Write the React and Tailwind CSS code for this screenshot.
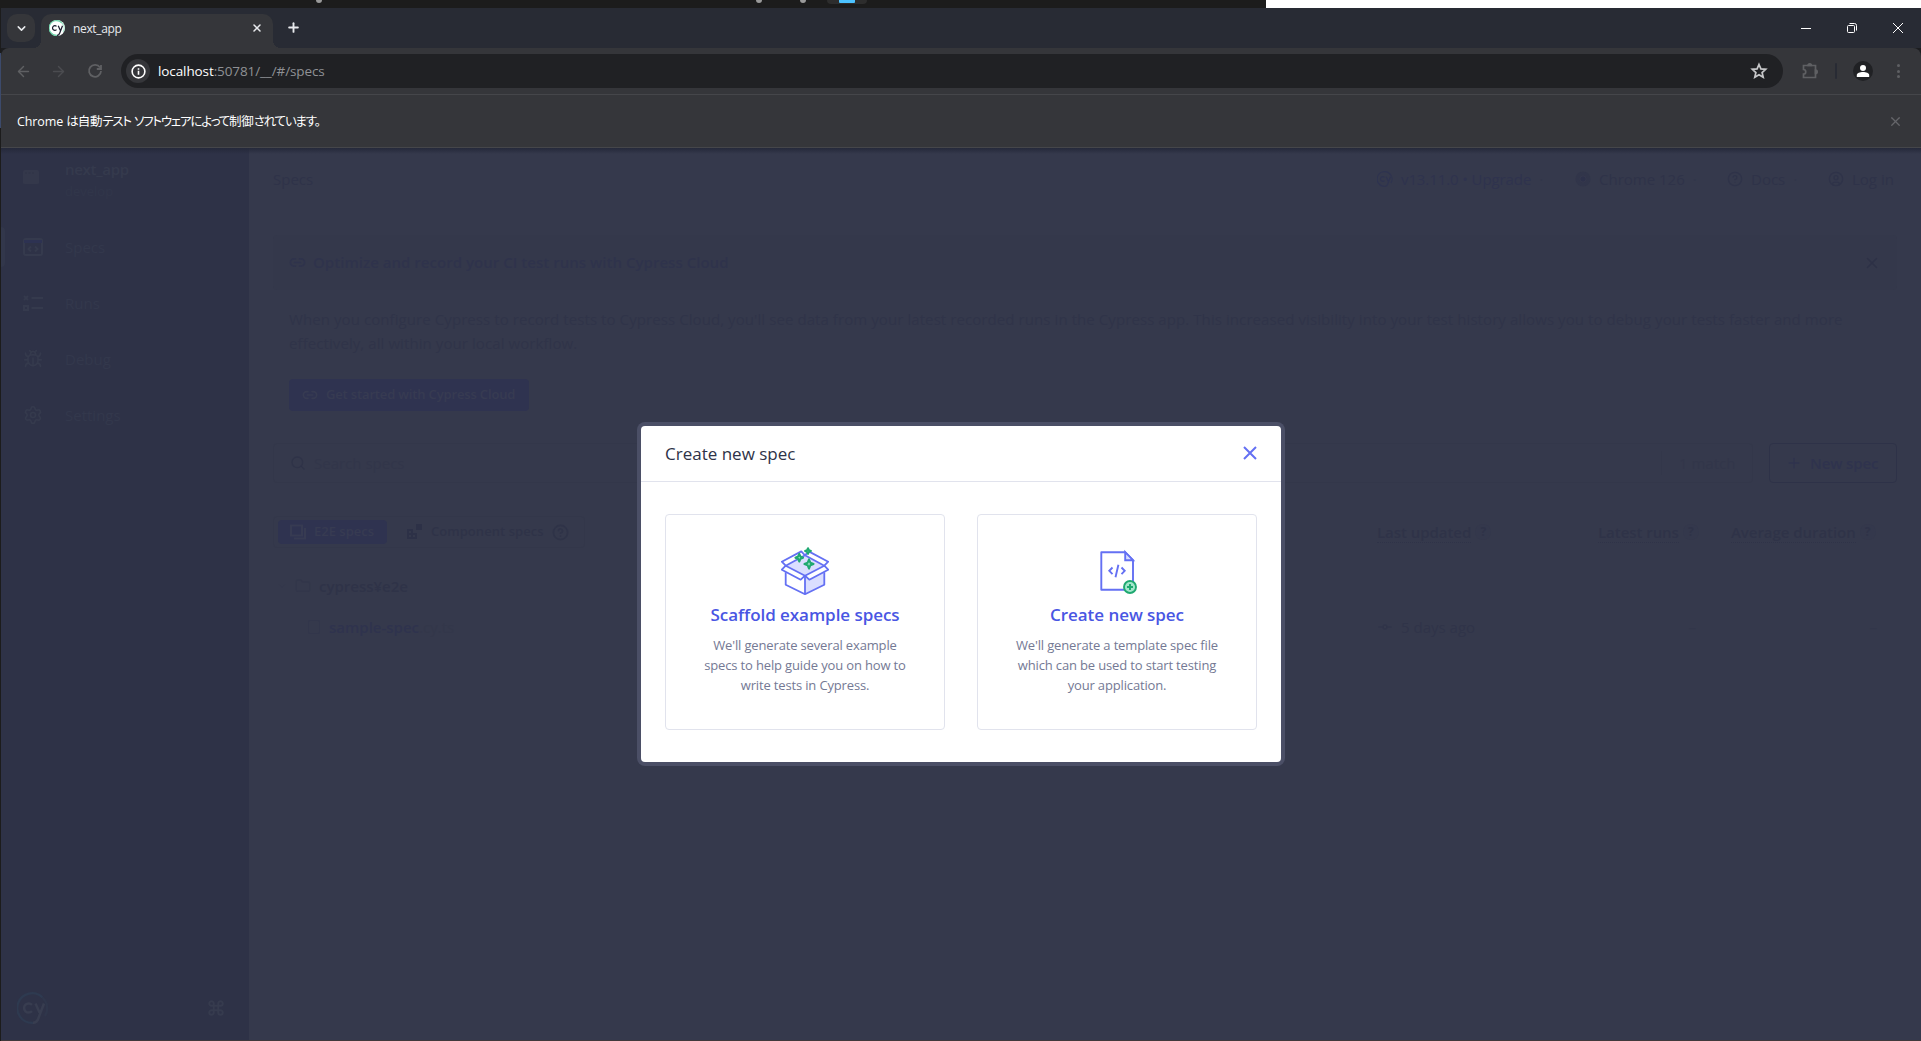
import React from 'react';
import { ArrowLeft, ArrowRight, Command, Link2, Plus, Search, Settings, Bug, X, ChevronDown, Folder, GitCommitHorizontal, CircleHelp, CircleUser } from 'lucide-react';

const navItems = [
  { label: 'Specs', icon: SpecsIcon, active: true },
  { label: 'Runs', icon: RunsIcon },
  { label: 'Debug', icon: Bug },
  { label: 'Settings', icon: Settings },
];

function SpecsIcon({ className }) {
  return (
    <svg viewBox="0 0 20 20" fill="none" stroke="currentColor" strokeWidth="2" className={className}>
      <rect x="1" y="2" width="18" height="16" rx="1.500" />
      <path d="M1 4.500h18" stroke="#2d3252" strokeWidth="3" />
      <path d="M8 9.500L5.500 12 8 14.500M12 9.500l2.500 2.500-2.500 2.500" />
    </svg>
  );
}

function RunsIcon({ className }) {
  return (
    <svg viewBox="0 0 20 20" fill="none" stroke="currentColor" strokeWidth="2" className={className}>
      <path d="M1 3l4 4M5 3L1 7M8.500 5H20M8.500 15H20" />
      <rect x="1" y="13" width="4" height="4" />
    </svg>
  );
}

function CypressMark({ className, ring, tail, letters }) {
  return (
    <svg viewBox="0 0 32 32" fill="none" className={className}>
      <path d="M25.500 5.500A14.800 14.800 0 1 0 16 30.800" stroke={ring} strokeWidth="2.200" />
      <path d="M25.500 5.500A14.800 14.800 0 0 1 28 24" stroke={tail} strokeWidth="2.200" />
      <path d="M15 12.800a4.600 4.600 0 1 0 0 6.400M18.500 11.500l4 9M27 11.500l-5.500 14.500c-1 3-2.500 4.800-5.500 4.800" stroke={letters} strokeWidth="2.500" />
    </svg>
  );
}

function ChromeIcon() {
  return (
    <svg viewBox="0 0 16 16" className="h-4 w-4">
      <circle cx="8" cy="8" r="7.500" fill="#31354a" />
      <circle cx="8" cy="8" r="3.200" fill="#2d314a" stroke="#36394d" />
    </svg>
  );
}

function BoxIcon() {
  return (
    <svg viewBox="0 0 48 48" fill="none" strokeWidth="1.800" strokeLinejoin="round" className="h-12 w-12">
      <path d="M4.700 18.700L24 8.300l19.300 10.400L24 28.700z" fill="#dadeff" />
      <path d="M24 28.700L43.300 22v15.700L24 47.200z" fill="#dadeff" />
      <g stroke="#6470f3">
        <path d="M4.700 25.300v12.400L24 47.200l19.300-9.500V25.300M24 28.700v18.500" />
        <path d="M4.700 18.700L.8 14.700 20.300 4.400 24 8.300z" fill="#fff" />
        <path d="M43.300 18.700l3.900-4L27.700 4.400 24 8.300z" fill="#fff" />
        <path d="M4.700 18.700L.8 22.700l18.900 10 4.300-4z" fill="#fff" />
        <path d="M43.300 18.700l3.900 4-18.900 10-4.300-4z" fill="#fff" />
      </g>
      <g fill="#a3e7cb" stroke="#1fa971" strokeWidth="2">
        <path d="M27 1.200l.9 2 2 .8-2 .9-.9 2-.9-2-2-.9 2-.8z" />
        <path d="M18.300 6.800l1.100 2.700 2.700 1.200-2.700 1.100-1.100 2.700-1.200-2.700-2.700-1.100 2.700-1.200z" />
        <path d="M28 12.400l1.300 3.300 3.300 1.300-3.300 1.300L28 21.600l-1.300-3.300-3.300-1.300 3.300-1.300z" />
      </g>
    </svg>
  );
}

function NewFileIcon() {
  return (
    <svg viewBox="0 0 48 48" fill="none" stroke="#6470f3" strokeWidth="1.900" className="h-12 w-12">
      <path d="M8.300 5.200H32l8 8v29.500H8.300z" strokeLinejoin="round" />
      <path d="M32.200 5.200v8H40z" fill="#dadeff" />
      <path d="M19.500 20.500l-3.200 3.300 3.200 3.300M28.500 20.500l3.200 3.300-3.200 3.300M25.400 17.700l-2.900 12.600" />
      <circle cx="37" cy="40" r="6" fill="#a3e7cb" stroke="#1fa971" />
      <path d="M37 37v6M34 40h6" stroke="#1fa971" strokeWidth="2" />
    </svg>
  );
}

function Taskbar() {
  return (
    <div className="flex h-2 bg-white">
      <div className="flex h-2 w-[1266px] bg-[#1c1c1c]">
        <div className="ml-[316px] h-[3px] w-1.5 rounded-b bg-[#9a9a9a]" />
        <div className="ml-[434px] h-[3px] w-1.5 rounded-b bg-[#9a9a9a]" />
        <div className="ml-[38px] h-[3px] w-1.5 rounded-b bg-[#9a9a9a]" />
        <div className="ml-[21px] flex h-1 w-10 justify-center rounded-b bg-[#2d2d2d]">
          <div className="h-[3px] w-4 rounded-b-[1px] bg-[#4cc2ff]" />
        </div>
      </div>
    </div>
  );
}

function TabStrip() {
  return (
    <div className="flex h-10 bg-[#282b34] pl-1.5 text-[#e8eaed]">
      <div className="mt-1.5 flex h-7 w-7 items-center justify-center rounded-[10px] bg-[#35363a]">
        <ChevronDown size={13} strokeWidth={2.8} />
      </div>
      <div className="relative mt-1.5 ml-1.5 flex h-[34px] w-[232px] items-center rounded-t-[10px] bg-[#35363a] pr-[10px] pb-[7px] pl-2">
        <div className="absolute bottom-0 -left-2 h-2 w-2 bg-[radial-gradient(circle_at_0_0,#282b34_8px,#35363a_8px)]" />
        <div className="absolute -right-2 bottom-0 h-2 w-2 bg-[radial-gradient(circle_at_100%_0,#282b34_8px,#35363a_8px)]" />
        <div className="h-4 w-4 rounded-full bg-white">
          <CypressMark className="h-4 w-4" ring="#69d3a7" tail="#a3e7cb" letters="#1b1e2e" />
        </div>
        <span className="mt-[3px] ml-2 text-xs tracking-[-0.35px]">next_app</span>
        <X size={12} strokeWidth={3} className="ml-auto" />
      </div>
      <Plus size={15} strokeWidth={3} className="mt-3 ml-[13px]" />
      <div className="mt-3 mr-[18px] ml-auto flex h-4 items-center gap-9 text-white">
        <svg viewBox="0 0 10 10" className="h-2.5 w-2.5" stroke="currentColor"><path d="M0 5.500h10" /></svg>
        <svg viewBox="0 0 10 10" className="h-2.5 w-2.5" fill="none" stroke="currentColor">
          <rect x=".5" y="2.500" width="7" height="7" rx="1" />
          <path d="M2.500 .5h5a2 2 0 0 1 2 2v5" />
        </svg>
        <svg viewBox="0 0 10 10" className="h-2.5 w-2.5" stroke="currentColor"><path d="M0 0l10 10M10 0L0 10" /></svg>
      </div>
    </div>
  );
}

function AddressBar() {
  return (
    <div className="bg-[#1c1d20]">
      <div className="flex h-[47px] items-center rounded-t-lg border-b border-[#45464a] bg-[#35363a] pl-[14px] text-[#5f6063]">
        <ArrowLeft size={17} strokeWidth={2} />
        <ArrowRight size={17} strokeWidth={2} className="ml-[18px] text-[#4b4c50]" />
        <svg viewBox="0 0 16 16" className="ml-[20px] h-4 w-4" fill="none" stroke="currentColor" strokeWidth="1.800">
          <path d="M13 4.500A6 6 0 1 0 14 8M14 2v4H9.800" />
        </svg>
        <div className="ml-[18px] flex h-[34px] w-[1662px] items-center rounded-full bg-[#202124] pl-[5px]">
          <div className="flex h-6 w-6 items-center justify-center rounded-full bg-[#35363a]">
            <svg viewBox="0 0 16 16" className="h-[15px] w-[15px]" fill="none" stroke="#fff" strokeWidth="1.700">
              <circle cx="8" cy="8" r="6.800" />
              <path d="M8 7.200v4.200M8 4.400v1.700" />
            </svg>
          </div>
          <span className="mt-px ml-2 text-[13.5px] tracking-[-0.1px] text-[#8f9195]">
            <span className="text-white">localhost</span>:50781/__/#/specs
          </span>
          <svg viewBox="0 0 18 18" className="mr-[15px] ml-auto h-[18px] w-[18px]" fill="none" stroke="#c7c8ca" strokeWidth="1.700">
            <path d="M9 2.500l1.900 4.400 4.800.4-3.600 3.200 1.100 4.700L9 12.700l-4.200 2.500 1.100-4.700-3.600-3.200 4.800-.4z" />
          </svg>
        </div>
        <svg viewBox="0 0 18 18" className="ml-[18px] h-[18px] w-[18px]" fill="none" stroke="currentColor" strokeWidth="1.700">
          <path d="M2.500 3.500h12v12h-12v-3.300c3 0 3-4.700 0-4.700z" />
          <path d="M7 3.500a1.700 1.700 0 0 1 3.400 0zM14.500 8a1.700 1.700 0 0 1 0 3.400z" fill="currentColor" />
        </svg>
        <div className="ml-4 h-4 w-0.5 rounded bg-[#282b34]" />
        <div className="ml-4 flex h-5 w-5 items-center justify-center rounded-full bg-[#202124]">
          <svg viewBox="0 0 14 14" className="h-3.5 w-3.5" fill="#fff">
            <circle cx="7" cy="4" r="3" />
            <path d="M.8 13v-2C.8 9 4 8 7 8s6.200 1 6.200 3v2z" />
          </svg>
        </div>
        <div className="ml-6 flex w-1 flex-col gap-[2.500px]">
          <div className="h-[3px] w-[3px] rounded-full bg-[#5f6063]" />
          <div className="h-[3px] w-[3px] rounded-full bg-[#5f6063]" />
          <div className="h-[3px] w-[3px] rounded-full bg-[#5f6063]" />
        </div>
      </div>
      <div className="flex h-[53px] items-center border-b border-[#45464a] bg-[#35363a] pr-5 pl-4">
        <span className="mt-[3px] text-[12.5px] tracking-[-1.2px] text-white [font-feature-settings:'palt']">
          <span className="tracking-[-0.1px]">Chrome </span>
          は<span className="tracking-[-0.2px]">自動</span>テスト<span className="tracking-normal"> </span>ソフトウェアによって<span className="tracking-[-0.2px]">制御</span>されています。
        </span>
        <X size={15} strokeWidth={2} className="ml-auto -mr-0.5 text-[#65666a]" />
      </div>
    </div>
  );
}

function Sidebar() {
  return (
    <aside className="flex w-[248px] flex-col bg-[#2e3247] pt-4 text-[#353a4d]">
      <div className="flex h-[43px] pl-[22px]">
        <svg viewBox="0 0 16 14" className="mt-1.5 h-3.5 w-4">
          <rect width="16" height="14" rx="1.500" fill="#34384b" />
          <path d="M2 3h2M5.500 3h2M9 3h2" stroke="#2e3247" />
        </svg>
        <div className="ml-[26px] -mt-4 pt-[9px]">
          <p className="text-[15px] leading-6 font-semibold tracking-[-0.3px]">next_app</p>
          <p className="text-[13px] leading-5 text-[#31364a]">develop</p>
        </div>
      </div>
      <nav className="mt-3 flex flex-col">
        {navItems.map(({ label, icon: Icon, active }) => (
          <div key={label} className="flex h-14 items-center">
            <div className={active ? 'h-10 w-1 rounded-r bg-[#32374b]' : 'h-10 w-1'} />
            <Icon className="ml-[18px] h-5 w-5" />
            <span className="ml-[22px] text-[15px] text-[#33384c]">{label}</span>
          </div>
        ))}
      </nav>
      <div className="mt-auto mb-4 flex items-center justify-between pr-6 pl-4">
        <CypressMark className="h-8 w-8" ring="#2e3a50" tail="#2f364b" letters="#383d50" />
        <Command size={18} strokeWidth={2.6} className="text-[#363b4e]" />
      </div>
    </aside>
  );
}

function PageHeader() {
  const dot = <span className="text-[#31364a]">·</span>;
  return (
    <header className="flex h-[62px] items-center justify-between text-[15px] text-[#2f3349]">
      <h1>Specs</h1>
      <div className="flex items-center">
        <div className="flex w-[198px] items-center gap-2 text-[#2f334e]">
          <CypressMark className="h-4 w-4" ring="#2e3350" tail="#2e3350" letters="#2e3350" />
          <span className="tracking-[-0.1px]">v13.11.0 • Upgrade</span>
          {dot}
        </div>
        <div className="flex w-[152px] items-center gap-2"><ChromeIcon /><span>Chrome 126</span>{dot}</div>
        <div className="flex w-[101px] items-center gap-2"><CircleHelp size={16} /><span>Docs</span>{dot}</div>
        <div className="flex w-[69px] items-center gap-2"><CircleUser size={16} /><span className="whitespace-nowrap">Log in</span></div>
      </div>
    </header>
  );
}

function CloudBanner() {
  return (
    <section className="mt-[25px]">
      <div className="flex h-[55px] items-center rounded bg-[#34384b] px-4 text-[#2f334c]">
        <Link2 size={17} strokeWidth={2.4} />
        <h2 className="ml-[7px] text-[15px] font-semibold tracking-[0.03px]">Optimize and record your CI test runs with Cypress Cloud</h2>
        <X size={18} className="ml-auto text-[#2d3146]" />
      </div>
      <div className="px-4 pt-[17px]">
        <p className="w-[1580px] text-[15px] leading-6 tracking-[0.08px] text-[#303449]">
          When you configure Cypress to record tests to Cypress Cloud, you'll see data from your latest recorded runs in the Cypress app. This increased visibility into your test history allows you to debug your tests faster and more<br />
          effectively, all within your local workflow.
        </p>
        <button className="mt-6 flex h-8 w-[240px] items-center rounded bg-[#2f3350] px-[13px] text-[13px] font-semibold tracking-[-0.15px] text-[#373b52]">
          <Link2 size={16} strokeWidth={2.4} />
          <span className="ml-2 whitespace-nowrap">Get started with Cypress Cloud</span>
        </button>
      </div>
    </section>
  );
}

function SearchRow() {
  return (
    <div className="mt-8 flex h-10 items-center gap-4 text-[15px]">
      <div className="flex h-10 flex-1 items-center rounded border border-[#33374a] pl-4 text-[#32364a]">
        <Search size={16} className="text-[#2f3348]" />
        <span className="ml-2">Search specs</span>
        <div className="ml-auto flex h-6 w-[91px] items-center border-l border-[#33374a] pl-[17px]">1 match</div>
      </div>
      <button className="flex h-10 w-32 items-center rounded border border-[#2e3248] pl-4 font-semibold tracking-[-0.1px] text-[#2f334e]">
        <Plus size={16} />
        <span className="ml-2 whitespace-nowrap">New spec</span>
      </button>
    </div>
  );
}

function ColumnTitle({ children }) {
  return (
    <div className="flex items-center gap-1 text-[15px] font-semibold tracking-[-0.05px] whitespace-nowrap">
      <span className="border-b border-dotted border-[#2f3348] leading-5">{children}</span>
      <span className="flex h-4 w-4 items-center justify-center rounded-full bg-[#34384c] text-xs font-bold">?</span>
    </div>
  );
}

function SpecsTable() {
  return (
    <div className="text-[15px] text-[#2f3348]">
      <div className="mt-[31px] grid h-9 grid-cols-[1104px_221px_133px_1fr] items-center">
        <div className="flex h-8 w-[312px] items-center rounded border border-[#33374a] pl-1 text-[13px] font-semibold">
          <div className="flex h-6 w-[109px] items-center rounded bg-[#2f3350] pl-3 text-[#373b52]">
            <svg viewBox="0 0 16 16" className="h-4 w-4" fill="none" stroke="currentColor" strokeWidth="2">
              <rect x="1" y="1.500" width="11" height="10" />
              <path d="M4 14.500h11V4" />
            </svg>
            <span className="ml-2">E2E specs</span>
          </div>
          <svg viewBox="0 0 16 16" className="ml-5 h-4 w-4" fill="#2d3147">
            <path d="M9 0h6v6H9zM0 5h6v4h4v6H0z" />
            <path d="M2 7h2v2H2zM2 11h2v2H2zM6 11h2v2H6z" fill="#35394c" />
          </svg>
          <span className="ml-2 w-[113px] tracking-[0.05px] whitespace-nowrap">Component specs</span>
          <CircleHelp size={17} strokeWidth={2.4} className="ml-2" />
        </div>
        <ColumnTitle>Last updated</ColumnTitle>
        <ColumnTitle>Latest runs</ColumnTitle>
        <ColumnTitle>Average duration</ColumnTitle>
      </div>
      <div className="mt-4 flex h-10 items-center pl-1">
        <ChevronDown size={10} className="text-[#32364a]" />
        <Folder size={16} className="ml-2 text-[#32364a]" />
        <span className="ml-2 font-semibold">cypress¥e2e</span>
      </div>
      <div className="mt-px grid h-10 grid-cols-[1104px_221px_98px_181px] items-center">
        <div className="flex items-center pl-[35px]">
          <div className="h-3.5 w-3 rounded-xs border border-[#32364b]" />
          <span className="ml-[9px] font-semibold text-[#2f334e]">sample-spec</span>
          <span className="text-[#33374a]">.cy.ts</span>
        </div>
        <div className="flex items-center gap-2 text-[#303449]"><GitCommitHorizontal size={16} /><span>5 days ago</span></div>
        <span className="text-right text-[#32364a]">–</span>
        <span className="text-right text-[#32364a]">–</span>
      </div>
    </div>
  );
}

function SpecCard({ icon, title, children }) {
  return (
    <div className="flex h-[216px] w-[280px] flex-col items-center rounded border border-[#e1e3ed] pt-8 text-center">
      {icon}
      <h3 className="mt-2 text-[17px] leading-6 font-semibold tracking-[-0.05px] text-[#4956e3]">{title}</h3>
      <p className="mt-2 text-[13px] leading-5 tracking-[-0.15px] text-[#747994]">{children}</p>
    </div>
  );
}

function CreateSpecModal() {
  return (
    <div className="absolute top-[278px] left-[640px] h-[336px] w-[640px] rounded bg-white ring-4 ring-[#4b4f66]">
      <div className="flex h-14 items-center justify-between border-b border-[#e1e3ed] px-6">
        <h2 className="text-[17px] text-[#2e3247]">Create new spec</h2>
        <svg viewBox="0 0 14 14" className="-mt-0.5 h-3.5 w-3.5" stroke="#6470f3" strokeWidth="2">
          <path d="M1 1l12 12M13 1L1 13" />
        </svg>
      </div>
      <div className="flex gap-8 px-6 pt-8">
        <SpecCard icon={<BoxIcon />} title="Scaffold example specs">
          We'll generate several example<br />specs to help guide you on how to<br />write tests in Cypress.
        </SpecCard>
        <SpecCard icon={<NewFileIcon />} title="Create new spec">
          We'll generate a template spec file<br />which can be used to start testing<br />your application.
        </SpecCard>
      </div>
    </div>
  );
}

export default function App() {
  return (
    <div className="flex h-[1041px] w-[1921px] flex-col overflow-hidden bg-[#1c1c1c] font-['Open_Sans','Noto_Sans_CJK_JP',sans-serif]">
      <Taskbar />
      <div className="flex flex-1">
        <div className="w-px pt-[45px]">
          <div className="h-[75px] bg-[#3c4a6b]" />
        </div>
        <div className="flex w-[1920px] flex-col">
          <TabStrip />
          <AddressBar />
          <div className="relative flex flex-1 border-b border-[#40393c]">
            <Sidebar />
            <main className="flex-1 bg-[#35394c] px-6">
              <PageHeader />
              <CloudBanner />
              <SearchRow />
              <SpecsTable />
            </main>
            <div className="absolute inset-x-0 top-0 h-1.5 bg-linear-to-b from-[#25293a] to-transparent" />
            <CreateSpecModal />
          </div>
        </div>
      </div>
    </div>
  );
}
